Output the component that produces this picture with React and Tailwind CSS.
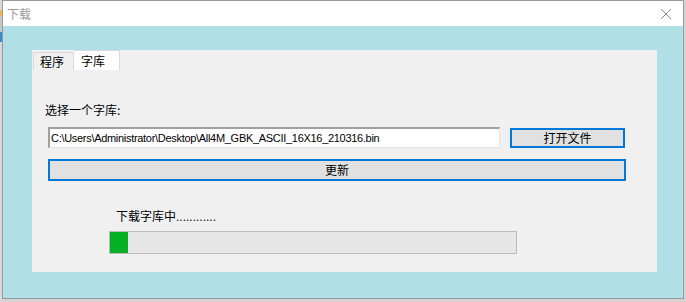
import React from "react";

const cjk = { fontFamily: '"Noto Sans CJK SC", "Liberation Sans", sans-serif' };
const lat = { fontFamily: '"Liberation Sans", "Noto Sans CJK SC", sans-serif' };

export default function App() {
  return (
    <div className="w-[686px] h-[302px] bg-[#d4d4d4] flex overflow-hidden relative">
      <div className="w-[2px] h-full flex flex-col shrink-0">
        <div className="h-[10px] bg-[#d9d9d9]" />
        <div className="h-[6px] bg-[#e8b84a]" />
        <div className="h-[16px] bg-[#c8c8c8]" />
        <div className="h-[10px] bg-[#3a86d8]" />
        <div className="flex-1 bg-[#d8d8d8]" />
      </div>
      <div className="w-[682px] h-[299px] border border-[#9a9a9a] flex flex-col bg-white shrink-0">
        <div className="h-[25px] bg-white flex items-center justify-between pl-[4px] pr-[10px] shrink-0">
          <span className="text-[12px] text-[#9b9b9b] leading-none" style={cjk}>下载</span>
          <svg width="12" height="12" viewBox="0 0 12 12" className="mr-[1px]">
            <path d="M1 1 L11 11 M11 1 L1 11" stroke="#8c8c8c" strokeWidth="1" />
          </svg>
        </div>
        <div className="flex-1 bg-[#b0dfe5] pl-[29px] pr-[26px] pt-[24px] pb-[26px] flex">
          <div className="flex-1 bg-[#f0f0f0] flex flex-col">
            <div className="flex items-end h-[20px] pl-[1px]">
              <div className="h-[18px] w-[41px] border-t border-l border-r border-[#d9d9d9] flex items-center pl-[6px] text-[12px] text-black" style={cjk}>程序</div>
              <div className="h-[20px] w-[46px] bg-white border-t border-r border-[#d9d9d9] flex items-center pl-[7px] text-[12px] text-black" style={cjk}>字库</div>
            </div>
            <div className="mt-[32px] pl-[13px] text-[12px] leading-[16px] text-black" style={cjk}>选择一个字库:</div>
            <div className="mt-[9px] pl-[16px] flex items-start">
              <div className="w-[452px] h-[21px] bg-white border-t-2 border-l-2 border-[#a0a0a0] border-r border-b border-r-[#e3e3e3] border-b-[#e3e3e3] flex items-center pl-[1px] pt-[1px] text-[11px] tracking-[-0.3px] text-black whitespace-nowrap overflow-hidden" style={lat}>
                C:\Users\Administrator\Desktop\All4M_GBK_ASCII_16X16_210316.bin
              </div>
              <div className="ml-[10px] mt-[1px] w-[115px] h-[20px] border-2 border-[#0078d7] bg-[#e1e1e1] flex items-center justify-center text-[12px] text-black" style={cjk}>打开文件</div>
            </div>
            <div className="mt-[11px] ml-[16px] w-[578px] h-[22px] border-2 border-[#0078d7] bg-[#e1e1e1] flex items-center justify-center text-[12px] text-black" style={cjk}>更新</div>
            <div className="mt-[27px] pl-[84px] text-[12px] leading-[16px] text-black whitespace-nowrap" style={cjk}>
              下载字库中<span style={lat}>............</span>
            </div>
            <div className="mt-[6px] ml-[77px] w-[408px] h-[23px] border border-[#bcbcbc] bg-[#e6e6e6] flex">
              <div className="w-[18px] h-full bg-[#06b025]" />
            </div>
          </div>
        </div>
      </div>
    </div>
  );
}
